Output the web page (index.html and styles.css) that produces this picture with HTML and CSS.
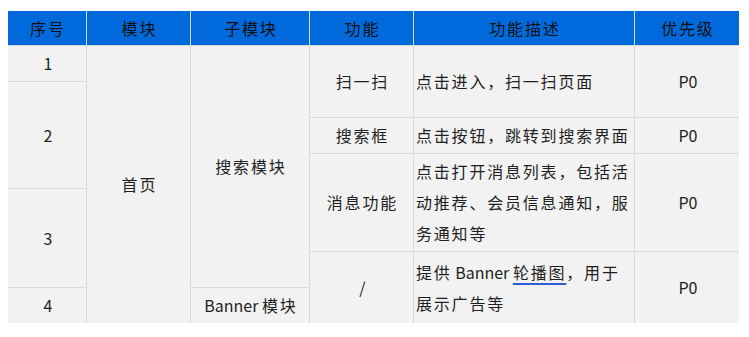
FILE: index.html
```html
<!DOCTYPE html>
<html lang="zh-CN">
<head>
<meta charset="utf-8">
<link rel="stylesheet" href="styles.css">
</head>
<body>
<div class="tbl">
  <div class="h hc1">序号</div>
  <div class="h hc2">模块</div>
  <div class="h hc3">子模块</div>
  <div class="h hc4">功能</div>
  <div class="h hc5">功能描述</div>
  <div class="h hc6">优先级</div>

  <div class="c no1"><span class="lat">1</span></div>
  <div class="c no2"><span class="lat">2</span></div>
  <div class="c no3"><span class="lat">3</span></div>
  <div class="c no4"><span class="lat">4</span></div>

  <div class="c mod">首页</div>
  <div class="c sub1">搜索模块</div>
  <div class="c sub2"><p class="txt"><span class="lat">Banner </span>模块</p></div>

  <div class="c f1">扫一扫</div>
  <div class="c f2">搜索框</div>
  <div class="c f3">消息功能</div>
  <div class="c f4"><span class="lat">/</span></div>

  <div class="c d d1">点击进入，扫一扫页面</div>
  <div class="c d d2">点击按钮，跳转到搜索界面</div>
  <div class="c d d3">点击打开消息列表，包括活动推荐、会员信息通知，服务通知等</div>
  <div class="c d d4"><p class="txt">提供<span class="lat"> Banner </span><span class="link">轮播图</span>，用于展示广告等</p></div>

  <div class="c p1"><span class="lat">P0</span></div>
  <div class="c p2"><span class="lat">P0</span></div>
  <div class="c p3"><span class="lat">P0</span></div>
  <div class="c p4"><span class="lat">P0</span></div>
</div>
</body>
</html>
```

FILE: styles.css
```css
html, body {
  margin: 0;
  background: #ffffff;
}
body {
  padding: 11px 10px 0 8px;
  font-family: "Noto Sans CJK SC", "Noto Sans", sans-serif;
  font-size: 16px;
  color: #1f1f1f;
}
.tbl {
  display: grid;
  width: 731px;
  grid-template-columns: 78px 103px 118px 103px 220px 104px;
  grid-template-rows: 34px 35px 35px 35px 34px 62px 35px 35px;
  gap: 1px;
  background: #d9d9d9;
}
.h, .c {
  display: flex;
  align-items: center;
  justify-content: center;
  text-align: center;
  letter-spacing: 1.8px;
  padding-left: 1.8px;
  line-height: 31px;
}
.h {
  background: #0069dc;
  color: #111111;
  grid-row: 1;
}
.c {
  background: #f2f2f2;
}
.lat {
  letter-spacing: 0;
}
.hc1 { grid-column: 1; }
.hc2 { grid-column: 2; }
.hc3 { grid-column: 3; }
.hc4 { grid-column: 4; }
.hc5 { grid-column: 5; }
.hc6 { grid-column: 6; }

.no1 { grid-column: 1; grid-row: 2; }
.no2 { grid-column: 1; grid-row: 3 / 6; }
.no3 { grid-column: 1; grid-row: 6 / 8; }
.no4 { grid-column: 1; grid-row: 8; }

.mod { grid-column: 2; grid-row: 2 / 9; }
.sub1 { grid-column: 3; grid-row: 2 / 8; }
.sub2 { grid-column: 3; grid-row: 8; }

.f1 { grid-column: 4; grid-row: 2 / 4; }
.f2 { grid-column: 4; grid-row: 4; }
.f3 { grid-column: 4; grid-row: 5 / 7; }
.f4 { grid-column: 4; grid-row: 7 / 9; }

.d {
  justify-content: flex-start;
  text-align: left;
  padding-left: 2px;
  padding-right: 0;
}
.d1 { grid-column: 5; grid-row: 2 / 4; }
.d2 { grid-column: 5; grid-row: 4; }
.d3 { grid-column: 5; grid-row: 5 / 7; }
.d4 { grid-column: 5; grid-row: 7 / 9; }

.p1 { grid-column: 6; grid-row: 2 / 4; }
.p2 { grid-column: 6; grid-row: 4; }
.p3 { grid-column: 6; grid-row: 5 / 7; }
.p4 { grid-column: 6; grid-row: 7 / 9; }

.txt {
  margin: 0;
}
.link {
  text-decoration: underline;
  text-decoration-color: #2a5fd6;
  text-decoration-thickness: 1.5px;
  text-underline-offset: 4px;
}
```
